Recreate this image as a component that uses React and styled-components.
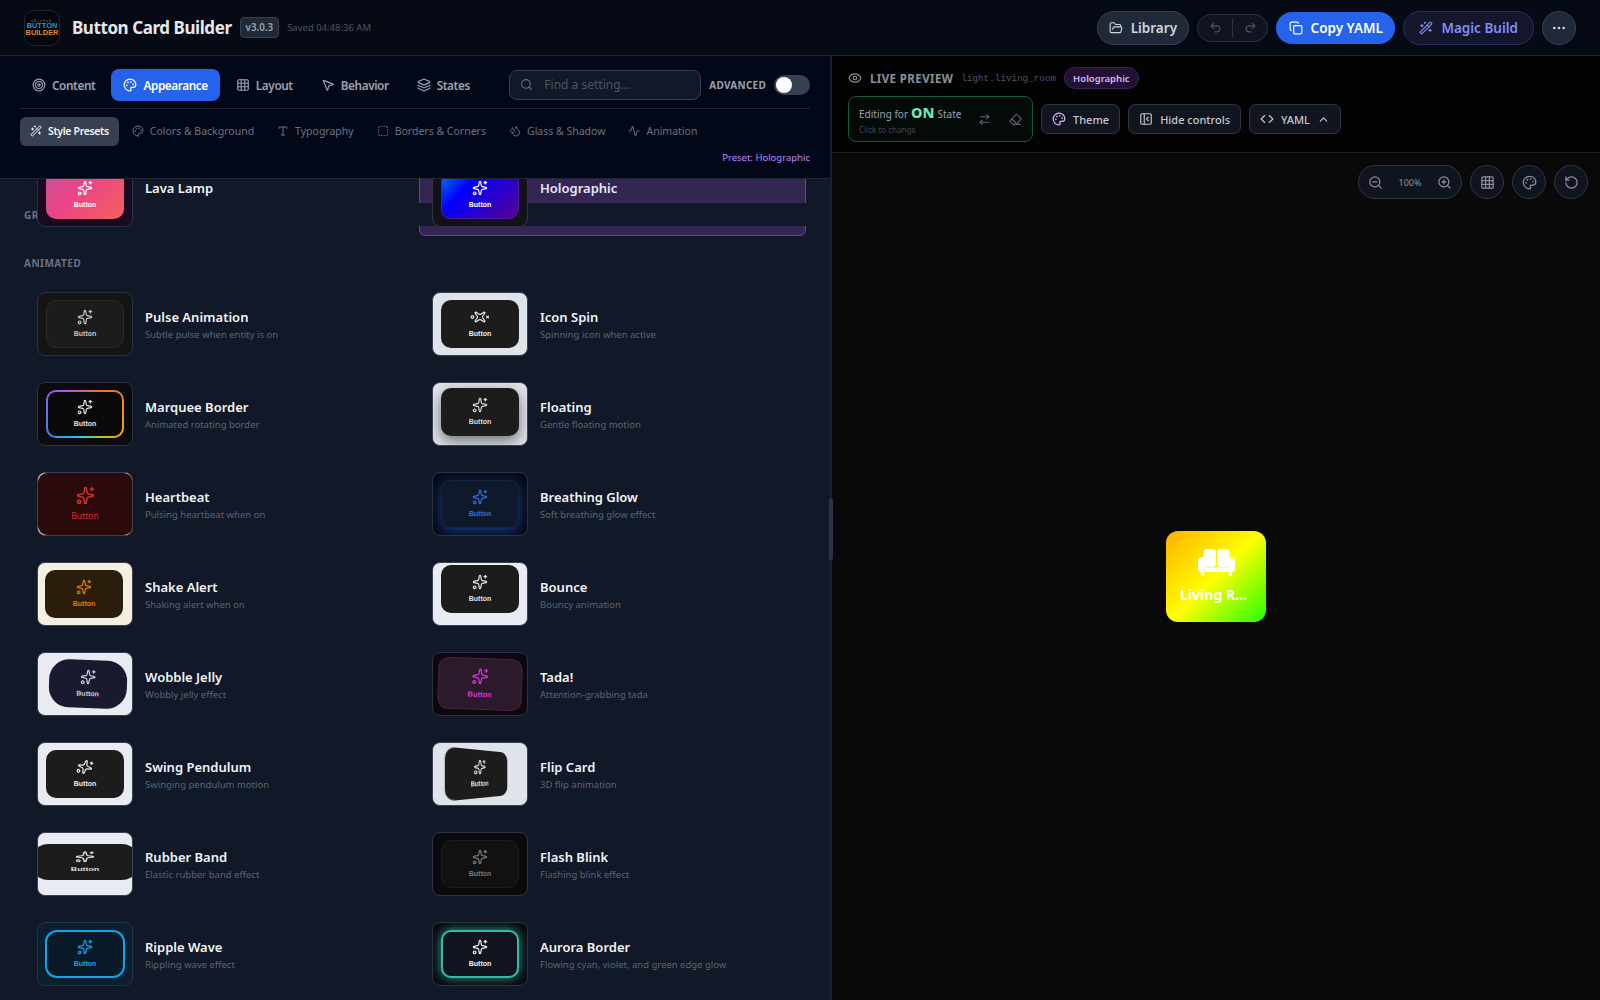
import React from 'react';
import styled, { createGlobalStyle, css } from 'styled-components';
import {
  Target, Palette, Grid3x3, MousePointer2, Layers, Search, WandSparkles, Type, SquareDashed, Droplets,
  Activity, FolderOpen, Undo2, Redo2, Copy, Ellipsis, Eye, ArrowRightLeft, Eraser, PanelLeftClose, Code,
  ChevronUp, ZoomOut, ZoomIn, RotateCcw, Sparkles,
} from 'lucide-react';

const Global = createGlobalStyle`
  html, body { margin: 0; padding: 0; height: 100%; background: #090909; overflow: hidden; }
  body { font-family: "Noto Sans", "Open Sans", sans-serif; }
  * { box-sizing: border-box; }
`;

const Page = styled.div`
  width: 1600px; height: 1000px; display: flex; flex-direction: column; overflow: hidden;
`;

const Header = styled.header`
  height: 56px; flex: none; display: flex; align-items: center; justify-content: space-between;
  padding: 0 24px; background: #060a14; border-bottom: 1px solid #1f2737;
`;
const Brand = styled.div`display: flex; align-items: center;`;
const Logo = styled.div`
  width: 36px; height: 36px; border-radius: 10px; background: #04060c; border: 1px solid #1e2636;
  display: flex; flex-direction: column; align-items: center; justify-content: center; margin-right: 12px;
  font-family: "Liberation Sans", sans-serif; font-weight: 700; line-height: 7px; font-size: 7.4px;
`;
const LogoSky = styled.svg`display: block; margin-bottom: 0;`;
const LogoTop = styled.span`color: #2b93c4;`;
const LogoBottom = styled.span`color: #d98a34;`;
const Title = styled.h1`margin: 0 8px 0 0; font-size: 17px; font-weight: 700; color: #e5e7eb; letter-spacing: -0.43px;`;
const Version = styled.span`
  height: 21px; padding: 0 5px; display: flex; align-items: center; border-radius: 4px; background: #1f2937;
  border: 1px solid #374151; color: #9ca3af; font-size: 9.8px; font-weight: 600;
`;
const Saved = styled.span`margin-left: 8px; font-size: 9.5px; color: #4b5563;`;
const Actions = styled.div`display: flex; align-items: center; gap: 8px;`;
const PillBase = styled.button`
  height: 34px; padding: 0 12px; display: flex; align-items: center; gap: 8px; border-radius: 17px;
  font: 600 13.5px "Noto Sans", sans-serif; cursor: pointer;
`;
const LibraryBtn = styled(PillBase)`padding: 0 11px; background: #1f2937; border: 1px solid #374151; color: #d1d5db;`;
const CopyBtn = styled(PillBase)`height: 32px; padding: 0 12.5px; background: #2563eb; border: none; color: #fff;`;
const MagicBtn = styled(PillBase)`background: #14162c; border: 1px solid #2b2d63; color: #818cf8; padding: 0 15px;`;
const MoreBtn = styled(PillBase)`width: 34px; padding: 0; justify-content: center; background: #1f2937; border: 1px solid #374151; color: #d1d5db;`;
const HistoryGroup = styled.div`
  height: 28px; width: 71px; display: flex; align-items: center; border-radius: 14px; border: 1px solid #2a3240; background: #0f141f; color: #4b5563;
`;
const HistoryBtn = styled.span`flex: 1; display: flex; align-items: center; justify-content: center;`;
const HistorySep = styled.span`width: 1px; height: 20px; background: #2a3240;`;

const Main = styled.div`flex: 1; display: flex; min-height: 0;`;
const LeftPanel = styled.section`width: 830px; flex: none; display: flex; flex-direction: column; background: #111827; min-height: 0;`;
const Toolbar = styled.div`
  flex: none; height: 123px; padding: 13px 20px 0; background: #020817; border-bottom: 1px solid #1f2737; position: relative; z-index: 3;
`;
const TopRow = styled.div`display: flex; align-items: center; height: 40px; padding-bottom: 8px; border-bottom: 1px solid #1f2737;`;
const Tabs = styled.nav`display: flex; gap: 4px; margin-right: auto;`;
const Tab = styled.button`
  height: 32px; padding: 0 12px; display: flex; align-items: center; gap: 6px; border: none; border-radius: 8px;
  font: 600 11.8px "Noto Sans", sans-serif; letter-spacing: -0.42px;
  background: ${p => (p.$active ? '#2563eb' : 'transparent')}; color: ${p => (p.$active ? '#fff' : '#9ca3af')};
`;
const SearchBox = styled.div`
  width: 192px; flex: none; height: 30px; padding: 0 10px; display: flex; align-items: center; gap: 11px; border-radius: 8px;
  background: #111827; border: 1px solid #374151; color: #6b7280; font-size: 12px; margin-right: 8px;
`;
const SearchText = styled.span`color: #4b5563;`;
const AdvLabel = styled.span`font-size: 10px; font-weight: 700; letter-spacing: 0.25px; color: #9ca3af; margin-right: 8px;`;
const Toggle = styled.div`width: 36px; height: 20px; border-radius: 10px; background: #374151; padding: 2px; display: flex;`;
const Knob = styled.span`width: 16px; height: 16px; border-radius: 50%; background: #fff;`;
const SubRow = styled.div`display: flex; gap: 3px; margin-top: 8px;`;
const SubTab = styled.button`
  height: 29px; padding: 0 10px 2px; display: flex; align-items: center; gap: 6px; border: none; border-radius: 6px;
  font: ${p => (p.$active ? 600 : 400)} 10.5px "Noto Sans", sans-serif; letter-spacing: ${p => (p.$active ? '-0.35px' : '0')};
  background: ${p => (p.$active ? '#374151' : 'transparent')}; color: ${p => (p.$active ? '#f3f4f6' : '#6b7280')};
`;
const PresetNote = styled.div`margin-top: 5px; height: 14px; line-height: 14px; text-align: right; font-size: 9.5px; color: #c084fc;`;

const ListView = styled.div`flex: 1; overflow: hidden; position: relative; min-height: 0;`;
const ListInner = styled.div`margin-top: -26px; padding: 0 24px;`;
const GhostLabel = styled.div`
  position: absolute; left: 24px; top: 29px; height: 14px; line-height: 14px; font-size: 10px; font-weight: 700; letter-spacing: 0.5px; color: #6b7280;
`;
const SectionLabel = styled.div`
  height: 14px; line-height: 14px; margin: 19px 0 12px; font-size: 10px; font-weight: 700; letter-spacing: 0.5px; color: #6b7280;
`;
const Grid = styled.div`display: grid; grid-template-columns: 1fr 1fr; gap: 6px 8px;`;
const Item = styled.div`
  position: relative; height: ${p => (p.$selected ? 83 : 84)}px; padding: 9px 12px; display: flex; gap: 12px; align-items: flex-start; border-radius: 6px;
  border: 1px solid ${p => (p.$selected ? '#6d3fa8' : 'transparent')};
  background: ${p => (p.$selected ? '#332652' : 'transparent')};
`;
const SelectedGap = styled.span`position: absolute; left: -1px; right: -1px; top: 49px; height: 23px; background: #111827;`;
const Thumb = styled.div`
  position: relative; z-index: 1; width: 96px; height: 64px; flex: none; border-radius: 8px; border: 1px solid ${p => p.$line || '#2a3344'};
  background: ${p => p.$bg}; overflow: hidden; display: flex; align-items: center; justify-content: center;
`;
const Chip = styled.div`
  width: 78px; height: 48px; flex: none; border-radius: 10px; padding-bottom: 1px; display: flex; flex-direction: column; align-items: center; justify-content: center; gap: 4px;
  color: ${p => p.$color || '#d4d4d4'}; background: ${p => p.$bg || '#1c1c1c'};
  ${p => p.$extra};
`;
const ChipIcon = styled(Sparkles)`transform: ${p => p.$turn || 'none'};`;
const ChipText = styled.span`
  font: 700 7px/9px "Liberation Sans", sans-serif;
  ${p => p.$plain && css`font: 400 8.5px/10px "Noto Sans", sans-serif;`}
`;
const ItemText = styled.div`flex: 1; min-width: 0; position: relative; z-index: 1; padding-top: 15.5px;`;
const ItemTitle = styled.div`font-size: 13px; line-height: 18px; font-weight: 600; color: ${p => (p.$selected ? '#ebe6f5' : '#f3f4f6')};`;
const ItemSub = styled.div`font-size: 9.5px; line-height: 14px; margin-top: 2.5px; color: #5b6475;`;

const Resizer = styled.div`width: 2px; flex: none; background: #1a2030; position: relative; z-index: 4;`;
const Handle = styled.span`position: absolute; left: -1px; top: 442px; width: 4px; height: 62px; border-radius: 2px; background: #2a3344;`;

const RightPanel = styled.section`flex: 1; display: flex; flex-direction: column; min-width: 0; background: #090909;`;
const PreviewHead = styled.div`
  flex: none; height: 97px; padding: 11px 16px 0; background: #030303; border-bottom: 1px solid #1a202c;
  display: flex; flex-direction: column; gap: 7px;
`;
const HeadRow = styled.div`display: flex; align-items: center;`;
const LiveLabel = styled.span`margin-left: 8px; font-size: 11.5px; font-weight: 700; letter-spacing: 0.4px; color: #8b919c;`;
const EntityId = styled.span`margin-left: 8px; font: 400 9.3px "Liberation Mono", monospace; color: #4b5563;`;
const PresetPill = styled.span`
  margin-left: 8px; height: 22px; padding: 0 8px; display: flex; align-items: center; border-radius: 11px;
  background: #221133; border: 1px solid #3b2358; color: #d8b4fe; font-size: 9.5px; font-weight: 600;
`;
const ControlRow = styled.div`display: flex; align-items: center; gap: 8px;`;
const EditBox = styled.div`
  width: 185px; height: 46px; padding: 0 10px; display: flex; align-items: center; border-radius: 8px;
  background: #040a08; border: 1px solid #0f5c44;
`;
const EditText = styled.div`flex: 1; padding-top: 2px;`;
const EditLine = styled.div`display: flex; align-items: baseline; gap: 3px; font-size: 10px; line-height: 16px; color: #9ca3af;`;
const OnWord = styled.span`font-size: 14.5px; font-weight: 800; color: #6ee7b7; line-height: 16px;`;
const EditHint = styled.div`margin-top: 2px; font-size: 8px; line-height: 12px; color: #404652;`;
const EditIcons = styled.div`display: flex; gap: 18px; color: #5f6672;`;
const GhostBtn = styled.button`
  height: 30px; padding: 0 10px; display: flex; align-items: center; gap: 7px; border-radius: 7px;
  background: #111520; border: 1px solid #2e3644; color: #c4c8cf; font: 500 11px "Noto Sans", sans-serif;
`;
const Accent = styled.span`display: flex; color: ${p => p.$c};`;

const Canvas = styled.div`flex: 1; position: relative; display: flex; align-items: center; justify-content: center;`;
const CanvasTools = styled.div`position: absolute; top: 12px; right: 12px; display: flex; gap: 8px; color: #8b919c;`;
const ZoomGroup = styled.div`
  width: 104px; height: 34px; padding: 0 9px; display: flex; align-items: center; justify-content: space-between; border-radius: 17px;
  background: #10141f; border: 1px solid #2e3644;
`;
const ZoomValue = styled.span`font-size: 9px; color: #8b919c;`;
const RoundTool = styled.div`
  width: 34px; height: 34px; display: flex; align-items: center; justify-content: center; border-radius: 50%;
  background: #10141f; border: 1px solid #2e3644;
`;
const Card = styled.div`
  width: 100px; height: 91px; border-radius: 12px; display: flex; flex-direction: column; align-items: center; color: #fff; padding-top: 18px;
  background: linear-gradient(135deg, #ffb000 0%, #ffff00 50%, #22ff00 100%);
`;
const CardLabel = styled.div`margin-top: 10px; padding-right: 5px; font-size: 14px; line-height: 18px; font-weight: 700; white-space: nowrap;`;

const Sofa = () => (
  <svg width="37" height="27" viewBox="0 0 37 27" fill="#fff">
    <rect x="5.5" y="0" width="12.5" height="18" rx="4" />
    <rect x="19" y="0" width="12.5" height="18" rx="4" />
    <path d="M0 12a3.8 3.8 0 0 1 7.6 0v6.6h21.8V12a3.8 3.8 0 0 1 7.6 0v8a3 3 0 0 1-3 3H3a3 3 0 0 1-3-3z" />
    <rect x="3" y="22" width="3.4" height="5" />
    <rect x="30.6" y="22" width="3.4" height="5" />
  </svg>
);

const V = {
  lava: { bg: '#1a0a1e', chip: { $bg: 'linear-gradient(135deg,#c7559f 0%,#ec4386 40%,#f0625f 100%)', $color: '#fff' } },
  holo: { bg: '#13121c', line: '#353642', chip: { $bg: 'linear-gradient(135deg,#0080e0 0%,#0000ff 32%,#5a0090 100%)', $color: '#fff', $extra: css`border: 1px solid #4b1f9a;` } },
  pulse: { bg: '#141414', chip: { $extra: css`border: 1px solid #2a2a2a;` , $color: '#c4c4c4' } },
  marquee: { bg: '#0a0a0f', chip: { $color: '#e0e0e0', $extra: css`border: 2px solid transparent; background: linear-gradient(#0a0a0a,#0a0a0a) padding-box, conic-gradient(from 315deg,#a855f7,#f97316 25%,#eab308 48%,#22d3ee 65%,#3b82f6 80%,#a855f7) border-box;` } },
  spin: { bg: '#dfe3ea', line: '#3a4252', turn: 'rotate(45deg)', chip: { $color: '#e8e8e8' } },
  float: { bg: '#dfe3ea', line: '#3a4252', chip: { $color: '#d8d8d8', $extra: css`transform: translateY(-2px); box-shadow: 0 5px 14px rgba(0,0,0,.5);` } },
  heart: { bg: '#e6e6ea', line: '#3a4252', plain: true, size: 19, chip: { $bg: '#2a0a0a', $color: '#dc2f2f', $extra: css`width: 95px; height: 62px; border-radius: 9px; gap: 6px; padding-bottom: 2px;` } },
  breath: { bg: '#070b16', chip: { $bg: '#0e1a2c', $color: '#2f6fd8', $extra: css`border: 1px solid #16263c; box-shadow: 0 3px 12px #123a80;` } },
  shake: { bg: '#f5efe2', line: '#3a4252', chip: { $bg: '#2b1d0c', $color: '#e07b00', $extra: css`transform: translateX(-1px);` } },
  bounce: { bg: '#e9ebf2', line: '#3a4252', chip: { $color: '#e0e0e0', $extra: css`transform: translateY(-5px);` } },
  wobble: { bg: '#e9ebf2', line: '#3a4252', chip: { $bg: '#1a1a2e', $color: '#cfcfd8', $extra: css`border-radius: 20px; transform: translateX(3px) rotate(2deg);` } },
  tada: { bg: '#10060f', chip: { $bg: '#2c1a2c', $color: '#d633d6', $extra: css`border: 1px solid #3e2a40; transform: rotate(2deg) scale(1.08);` } },
  swing: { bg: '#e9ebf2', line: '#3a4252', turn: 'rotate(15deg)', chip: { $color: '#e8e8e8' } },
  flip: { bg: '#dfe3ea', line: '#3a4252', chip: { $color: '#e8e8e8', $extra: css`transform: perspective(190px) rotateY(38deg);` } },
  rubber: { bg: '#e9ebf2', line: '#3a4252', chip: { $color: '#e0e0e0', $extra: css`transform: translateY(-2px) scale(1.26,.75);` } },
  flash: { bg: '#0a0a0a', chip: { $bg: '#111111', $color: '#777', $extra: css`border: 1px solid #1c1c1c;` } },
  ripple: { bg: '#0a2030', chip: { $bg: '#0a1a28', $color: '#0ea5e9', $extra: css`width: 80px; border: 2px solid #0ea5e9; border-radius: 12px;` } },
  aurora: { bg: '#0a0d12', chip: { $bg: '#12141f', $color: '#f1f1f1', $extra: css`border: 2.5px solid #3ab8a5; box-shadow: 0 0 10px #2f9f95;` } },
};

const first = [
  { key: 'lava', title: 'Lava Lamp', sub: '' },
  { key: 'holo', title: 'Holographic', sub: '', selected: true },
];
const animated = [
  { key: 'pulse', title: 'Pulse Animation', sub: 'Subtle pulse when entity is on' },
  { key: 'spin', title: 'Icon Spin', sub: 'Spinning icon when active' },
  { key: 'marquee', title: 'Marquee Border', sub: 'Animated rotating border' },
  { key: 'float', title: 'Floating', sub: 'Gentle floating motion' },
  { key: 'heart', title: 'Heartbeat', sub: 'Pulsing heartbeat when on' },
  { key: 'breath', title: 'Breathing Glow', sub: 'Soft breathing glow effect' },
  { key: 'shake', title: 'Shake Alert', sub: 'Shaking alert when on' },
  { key: 'bounce', title: 'Bounce', sub: 'Bouncy animation' },
  { key: 'wobble', title: 'Wobble Jelly', sub: 'Wobbly jelly effect' },
  { key: 'tada', title: 'Tada!', sub: 'Attention-grabbing tada' },
  { key: 'swing', title: 'Swing Pendulum', sub: 'Swinging pendulum motion' },
  { key: 'flip', title: 'Flip Card', sub: '3D flip animation' },
  { key: 'rubber', title: 'Rubber Band', sub: 'Elastic rubber band effect' },
  { key: 'flash', title: 'Flash Blink', sub: 'Flashing blink effect' },
  { key: 'ripple', title: 'Ripple Wave', sub: 'Rippling wave effect' },
  { key: 'aurora', title: 'Aurora Border', sub: 'Flowing cyan, violet, and green edge glow' },
];

const Preset = ({ p }) => {
  const v = V[p.key];
  return (
    <Item $selected={p.selected}>
      {p.selected && <SelectedGap />}
      <Thumb $bg={v.bg} $line={v.line}>
        <Chip {...v.chip}>
          <ChipIcon size={v.size || 16} strokeWidth={1.8} $turn={v.turn} />
          <ChipText $plain={v.plain}>Button</ChipText>
        </Chip>
      </Thumb>
      <ItemText>
        <ItemTitle $selected={p.selected}>{p.title}</ItemTitle>
        {p.sub && <ItemSub>{p.sub}</ItemSub>}
      </ItemText>
    </Item>
  );
};

export default function App() {
  return (
    <Page>
      <Global />
      <Header>
        <Brand>
          <Logo>
            <LogoSky width="24" height="3" viewBox="0 0 24 3">
              <path d="M2 3V1M5 3V0M8 3V2M11 3V1M14 3V0M17 3V1M20 3V0" stroke="#2b6f93" strokeWidth="1" />
            </LogoSky>
            <LogoTop>BUTTON</LogoTop>
            <LogoBottom>BUILDER</LogoBottom>
          </Logo>
          <Title>Button Card Builder</Title>
          <Version>v3.0.3</Version>
          <Saved>Saved 04:48:36 AM</Saved>
        </Brand>
        <Actions>
          <LibraryBtn><FolderOpen size={14} />Library</LibraryBtn>
          <HistoryGroup>
            <HistoryBtn><Undo2 size={13} /></HistoryBtn>
            <HistorySep />
            <HistoryBtn><Redo2 size={13} /></HistoryBtn>
          </HistoryGroup>
          <CopyBtn><Copy size={14} />Copy YAML</CopyBtn>
          <MagicBtn><WandSparkles size={14} />Magic Build</MagicBtn>
          <MoreBtn><Ellipsis size={16} /></MoreBtn>
        </Actions>
      </Header>
      <Main>
        <LeftPanel>
          <Toolbar>
            <TopRow>
              <Tabs>
                <Tab><Target size={14} />Content</Tab>
                <Tab $active><Palette size={14} />Appearance</Tab>
                <Tab><Grid3x3 size={14} />Layout</Tab>
                <Tab><MousePointer2 size={14} />Behavior</Tab>
                <Tab><Layers size={14} />States</Tab>
              </Tabs>
              <SearchBox><Search size={13} /><SearchText>Find a setting...</SearchText></SearchBox>
              <AdvLabel>ADVANCED</AdvLabel>
              <Toggle><Knob /></Toggle>
            </TopRow>
            <SubRow>
              <SubTab $active><WandSparkles size={12} />Style Presets</SubTab>
              <SubTab><Palette size={12} />Colors &amp; Background</SubTab>
              <SubTab><Type size={12} />Typography</SubTab>
              <SubTab><SquareDashed size={12} />Borders &amp; Corners</SubTab>
              <SubTab><Droplets size={12} />Glass &amp; Shadow</SubTab>
              <SubTab><Activity size={12} />Animation</SubTab>
            </SubRow>
            <PresetNote>Preset: Holographic</PresetNote>
          </Toolbar>
          <ListView>
            <GhostLabel>GRADIENT</GhostLabel>
            <ListInner>
              <Grid>{first.map(p => <Preset key={p.key} p={p} />)}</Grid>
              <SectionLabel>ANIMATED</SectionLabel>
              <Grid>{animated.map(p => <Preset key={p.key} p={p} />)}</Grid>
            </ListInner>
          </ListView>
        </LeftPanel>
        <Resizer><Handle /></Resizer>
        <RightPanel>
          <PreviewHead>
            <HeadRow>
              <Accent $c="#8b919c"><Eye size={14} /></Accent>
              <LiveLabel>LIVE PREVIEW</LiveLabel>
              <EntityId>light.living_room</EntityId>
              <PresetPill>Holographic</PresetPill>
            </HeadRow>
            <ControlRow>
              <EditBox>
                <EditText>
                  <EditLine>Editing for <OnWord>ON</OnWord> State</EditLine>
                  <EditHint>Click to change</EditHint>
                </EditText>
                <EditIcons><ArrowRightLeft size={13} /><Eraser size={13} /></EditIcons>
              </EditBox>
              <GhostBtn><Accent $c="#d8b4fe"><Palette size={14} /></Accent>Theme</GhostBtn>
              <GhostBtn><PanelLeftClose size={14} />Hide controls</GhostBtn>
              <GhostBtn><Code size={14} />YAML<ChevronUp size={13} /></GhostBtn>
            </ControlRow>
          </PreviewHead>
          <Canvas>
            <CanvasTools>
              <ZoomGroup><ZoomOut size={15} /><ZoomValue>100%</ZoomValue><ZoomIn size={15} /></ZoomGroup>
              <RoundTool><Grid3x3 size={15} /></RoundTool>
              <RoundTool><Palette size={15} /></RoundTool>
              <RoundTool><RotateCcw size={15} /></RoundTool>
            </CanvasTools>
            <Card>
              <Sofa />
              <CardLabel>Living R...</CardLabel>
            </Card>
          </Canvas>
        </RightPanel>
      </Main>
    </Page>
  );
}
